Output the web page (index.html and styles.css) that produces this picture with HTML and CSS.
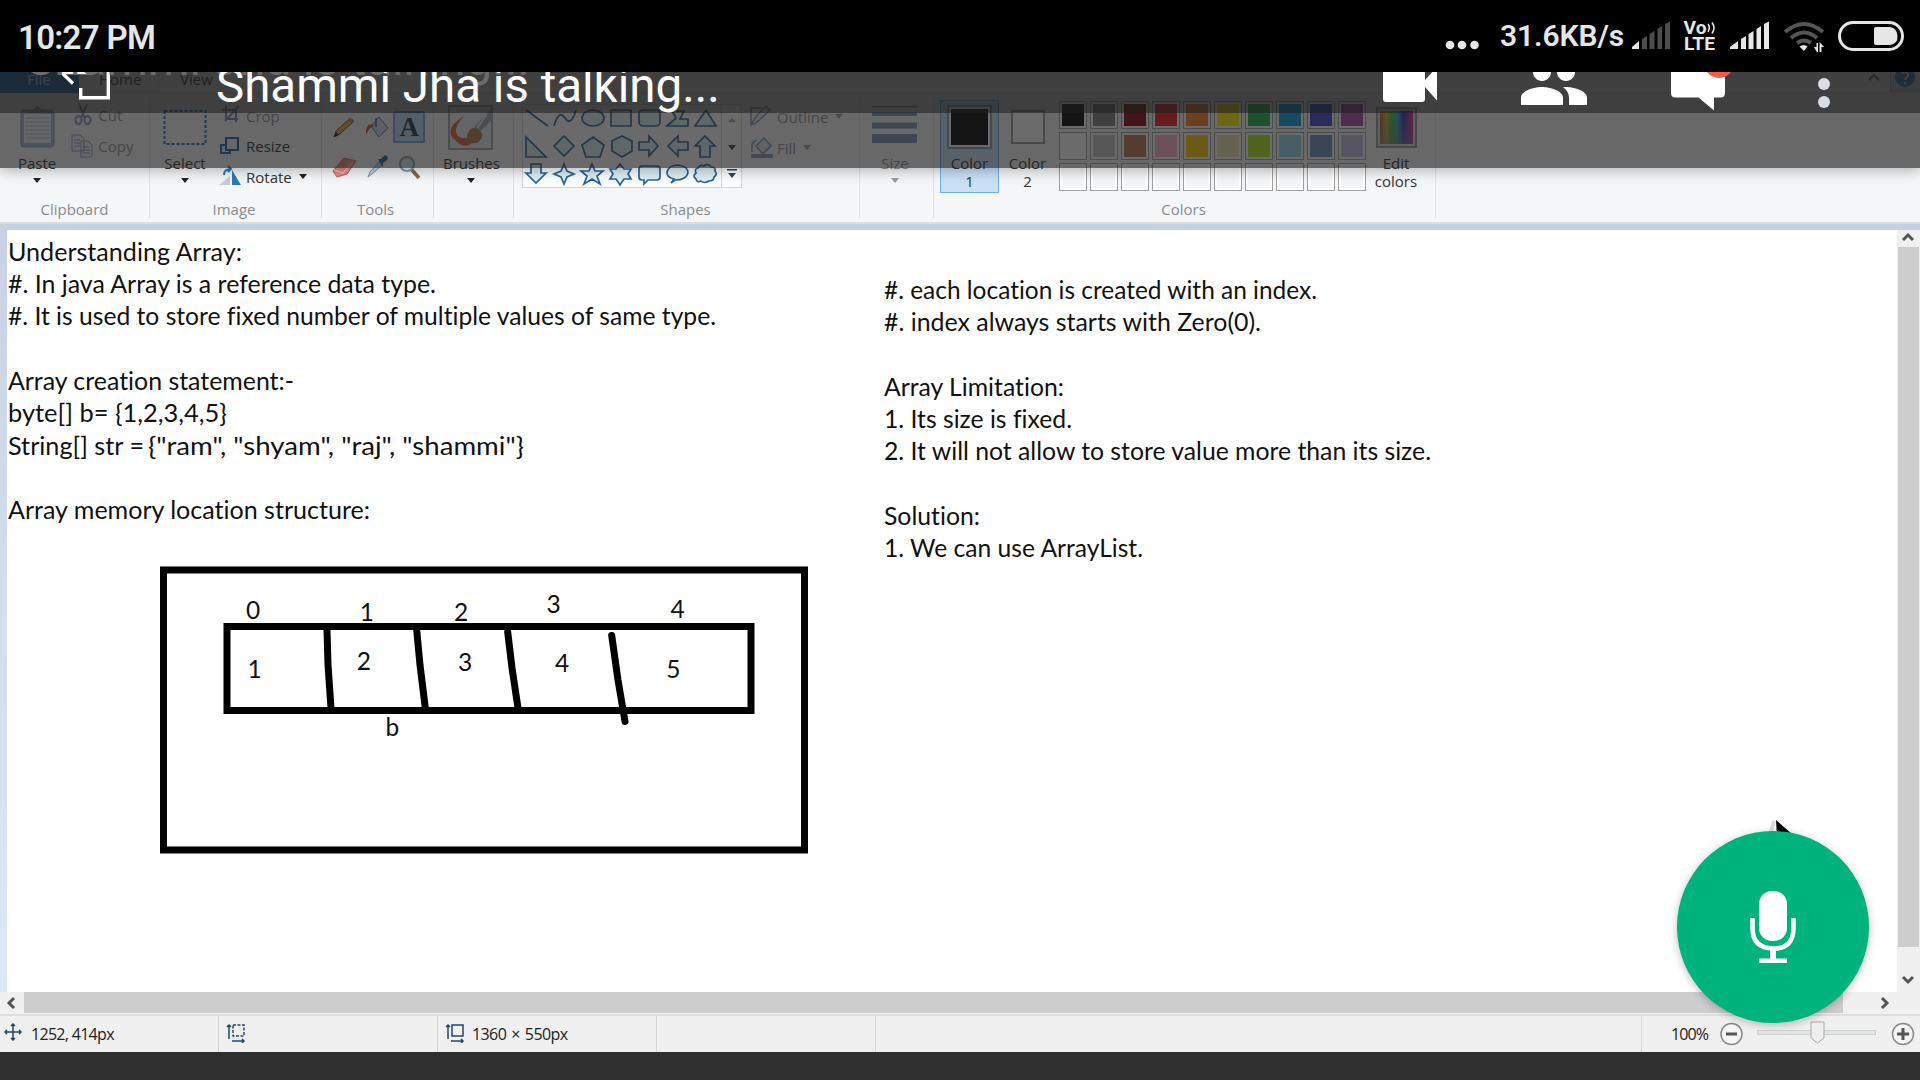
FILE: index.html
```html
<!DOCTYPE html>
<html lang="en">
<head>
<meta charset="utf-8">
<title>Shammi Jha is talking…</title>
<link rel="stylesheet" href="styles.css">
</head>
<body>
<div class="screen">
  <div class="statusbar">
    <span class="clock">10:27 PM</span>
    <svg class="more-dots" width="36" height="12"><circle cx="6" cy="6" r="4.3"/><circle cx="18" cy="6" r="4.3"/><circle cx="30.500" cy="6" r="4.3"/></svg>
    <span class="speed">31.6KB/s</span>
    <svg class="sys-icons" width="280" height="36" viewBox="1628 18 280 36">
      <path d="M1632 49V47L1639 41V49Z"/>
      <g class="faint"><path d="M1642 49V39L1647 36V49ZM1649.500 49V34L1654.500 31V49ZM1657.500 49V29L1662 26V49ZM1665 49V24L1670 21.500V49Z"/></g>
      <g class="volte"><text x="1683.500" y="34" textLength="23" lengthAdjust="spacingAndGlyphs">Vo</text><text x="1684" y="50" textLength="31" lengthAdjust="spacingAndGlyphs">LTE</text><path d="M1708 24q2.500 3.500 0 8M1712 22.500q4 5 0 11"/></g>
      <path d="M1730 49V47L1738 41V49ZM1741 49V39L1746 36V49ZM1748.500 49V34L1753.500 31V49ZM1756.500 49V29L1761 26V49ZM1764 49V24L1769 21.500V49Z"/>
      <g class="wifi"><path d="M1785 32Q1804 16 1823 32M1791 38Q1804 27 1817 38M1797 43Q1804 38 1811 43"/></g>
      <path d="M1799.500 46.500q4.500-3 8 0l-3.500 4.500ZM1814 47h2.500V43h1.500v9h-1.200ZM1819.500 42l4.500 5h-2.500v5h-2Z"/>
      <rect class="batt-line" x="1839.500" y="22.500" width="63" height="27" rx="13.500"/>
      <path d="M1876 27h14q7 1 7.500 9t-7.500 9h-14q-2 0-2-2V29q0-2 2-2Z"/>
    </svg>
  </div>

  <div class="callbar">
    <svg class="leave" width="40" height="50" viewBox="75 60 40 50" ><path d="M59 72.500H93M60 71L73 83.500M80.700 88V97.700H108.300V62"/></svg>
    <span class="ghost">Shammi Jha is talking...</span>
    <span class="talker">Shammi Jha is talking...</span>
    <svg class="call-icons" width="470" height="66" viewBox="1376 50 470 66">
      <path d="M1383 55h42v25L1437 67v33.500L1425 87v12q0 3-3 3h-36q-3 0-3-3Z"/>
      <g transform="translate(1518 48) scale(3)"><path d="M16 11c1.660 0 2.990-1.340 2.990-3S17.660 5 16 5c-1.660 0-3 1.340-3 3s1.340 3 3 3zm-8 0c1.660 0 2.990-1.340 2.990-3S9.660 5 8 5C6.340 5 5 6.340 5 8s1.340 3 3 3zm0 2c-2.330 0-7 1.170-7 3.500V19h14v-2.500c0-2.330-4.670-3.500-7-3.500zm8 0c-.29 0-.62.020-.97.050 1.160.840 1.970 1.970 1.970 3.450V19h6v-2.500c0-2.330-4.670-3.500-7-3.500z"/></g>
      <path d="M1671 55h54v38q0 4.500-4.500 4.500H1714V110.500L1698.500 97.500H1675.500q-4.500 0-4.500-4.500Z"/>
      <circle class="unread" cx="1719" cy="63" r="15"/>
      <g class="menu"><circle cx="1824" cy="84" r="6"/><circle cx="1824" cy="102" r="6"/></g>
    </svg>
  </div>
  <div class="veil"></div>

  <div class="tabs">
    <span class="tab file">File</span><span class="tab home">Home</span><span class="tab">View</span>
    <svg class="tab-tools" width="56" height="21"><path d="M5 8l5-5 5 5" fill="none" stroke="#777" stroke-width="2.500"/><rect x="26.500" y="-4" width="34" height="23" fill="#dcebf8" stroke="#99c6ec"/><circle cx="41" cy="5" r="10" fill="#1c80d2"/><path d="M38 2q3-4 6 0q1 2-3 5v1M41 10v2" stroke="#fff" stroke-width="2" fill="none"/></svg>
  </div>

  <div class="ribbon">
    <section class="group clipboard">
      <div class="tools">
        <div class="big paste">
          <svg width="35" height="43"><rect x="1" y="5" width="33" height="37" rx="3" fill="#a8b4ce" stroke="#8795b3"/><rect x="4" y="9" width="27" height="29" fill="#eef1f6"/><path d="M5 13h25M5 17h25M5 21h25M5 25h25M5 29h25M5 33h25" stroke="#b3bdcf"/><path d="M9 8V5h5q3-8 7 0h5v3Z" fill="#929db5"/></svg>
          <span>Paste</span><i class="caret"></i>
        </div>
        <div class="list">
          <div class="row dim"><svg width="24" height="24"><path d="M8 1l6 14M16 1l-6 14" stroke="#8490ab" stroke-width="2"/><g fill="none" stroke="#8490ab" stroke-width="2"><ellipse cx="7.500" cy="17" rx="3" ry="4"/><ellipse cx="16.500" cy="17" rx="3" ry="4"/></g></svg><span>Cut</span></div>
          <div class="row dim"><svg width="24" height="24"><g fill="#eef1f7" stroke="#8f9bb9"><path d="M1 1h8l4 4v12H1ZM10 7h7l4 4v12H10Z"/><path d="M3 6h6M3 9h6M3 12h6M12 13h6M12 16h7M12 19h7"/></g></svg><span>Copy</span></div>
        </div>
      </div>
      <div class="caption">Clipboard</div>
    </section>

    <section class="group image">
      <div class="tools">
        <div class="big select"><svg width="44" height="43"><rect x="1.500" y="6" width="41" height="33" fill="none" stroke="#2b6cb0" stroke-width="2" stroke-dasharray="3 2"/></svg><span>Select</span><i class="caret"></i></div>
        <div class="list">
          <div class="row dim"><svg width="24" height="24"><path d="M4 6h13v12M7 2v13h12M6 17L20 2" fill="none" stroke="#7785a5" stroke-width="2"/></svg><span>Crop</span></div>
          <div class="row"><svg width="24" height="24"><g fill="#eaf4fb" stroke="#1f66a7" stroke-width="2"><rect x="2" y="11" width="9" height="8"/><rect x="7" y="4" width="12" height="12"/></g></svg><span>Resize</span></div>
          <div class="row"><svg width="24" height="24"><path d="M0 20L11 11V20Z" fill="#c5ccd3"/><path d="M13 20V5l9 15Z" fill="#267bba"/><path d="M5 10q0-6 7-6M9 1l3 3-3 3" fill="none" stroke="#267bba" stroke-width="2"/></svg><span>Rotate</span><i class="caret"></i></div>
        </div>
      </div>
      <div class="caption">Image</div>
    </section>

    <section class="group paint">
      <svg class="art" width="112" height="92" viewBox="322 98 112 92">
        <path d="M334 137l2-6 14-13 4 3-14 13Z" fill="#dca94b" stroke="#6b5430"/><path d="M334 137l2-5 3 3Z" fill="#222"/><path d="M349 119l4 3" stroke="#d77" stroke-width="3"/>
        <path d="M371 126l8-9 9 11-9 9Z" fill="#cbdce8" stroke="#58758e"/><path d="M376 118v9" stroke="#476178" stroke-width="1.500"/><path d="M366 134q-1-12 9-9l-5 3Z" fill="#cf4934"/>
        <rect x="394" y="112" width="30" height="30" fill="#b8d9f7" stroke="#4790d7" stroke-width="1.500"/><text class="letter" x="399.500" y="136">A</text>
        <path d="M333 171l11-13 12 3-9 13-10 3Z" fill="#e68a84" stroke="#bd615d"/><path d="M334 170l9 3 11-12" fill="none" stroke="#f3bab5" stroke-width="1.500"/>
        <path d="M368 177l2-5 10-11 3 3-11 10Z" fill="#c1d8e8" stroke="#7290a8"/><path d="M378 159l3 0 4-4q4 1 2 5l-4 3 0 4Z" fill="#245d91"/>
        <circle cx="407" cy="164" r="7" fill="#d6e9f5" stroke="#8c98a4" stroke-width="2"/><path d="M412 170l7 8" stroke="#86654c" stroke-width="3.500"/>
      </svg>
      <div class="caption">Tools</div>
    </section>

    <section class="group brushes">
      <div class="tools"><div class="big">
        <svg width="46" height="45"><rect x="1" y="1" width="43" height="43" fill="#e9edf2" stroke="#8a8a8a" stroke-width="1.500"/><path d="M16 11Q-7 25 9 37q11 10 20-6Q10 37 8 27q-1-6 8-16Z" fill="#e15e3c"/><path d="M26 22L43 4V16L32 27Z" fill="#a0a9b4"/><path d="M39 9L29 23" stroke="#e7eff6" stroke-width="2"/><path d="M18 39q1-20 12-15 9 7-1 14Z" fill="#b27b42"/></svg>
        <span>Brushes</span><i class="caret"></i></div></div>
    </section>

    <section class="group shapes">
      <div class="tools">
        <svg width="222" height="92" viewBox="521 98 222 92">
          <rect x="522.500" y="104.500" width="219" height="83" fill="#fcfdfe" stroke="#d2d6dc"/><path d="M721.500 104V187" stroke="#d2d6dc"/>
          <g fill="#dceff6" stroke="#2c6495" stroke-width="1.700">
            <path d="M526 110l22 16M554 126q5-17 11-8t11-8" fill="none"/><ellipse cx="593" cy="118" rx="11" ry="8"/><path d="M611 110h20v16h-20Z"/><rect x="639" y="110" width="21" height="16" rx="4"/><path d="M667 126l9-8-4-7h12l-4 8h8v7ZM695 126l11-16 10 16Z"/>
            <path d="M526 137v20h20ZM564 136l10 10-10 10-10-10ZM593 137l11 8-4 12h-14l-4-12ZM622 136l10 5v10l-10 6-10-6v-10ZM639 142h10v-6l9 10-9 10v-6h-10ZM688 142h-10v-6l-10 10 10 10v-6h10ZM705 136l10 10h-5v11h-10v-11h-5Z"/>
            <path d="M531 164h10v9h5l-10 10-10-10h5ZM564 164l3 7 7 3-7 3-3 7-3-7-7-3 7-3ZM592 164l3 7h8l-6 5 3 8-8-5-8 5 3-8-6-5h8ZM620 164l4 5h7l-3 5 3 5h-7l-4 6-4-6h-6l3-5-3-5h6Z"/>
            <path d="M642 166h15q3 0 3 3v8q0 3-3 3h-9l-4 4v-4h-2q-3 0-3-3v-8q0-3 3-3ZM671 183l3-4q-8-2-7-7 2-7 11-7 10 1 10 8-2 7-13 7ZM698 168q2-4 6-2 4-3 7 1 5 0 4 4 3 3-1 6 0 4-5 4-5 3-8 0-4 2-5-2-4-3 0-6-2-4 2-5Z"/>
          </g>
          <path d="M728 122l4-4 4 4Z" fill="#9da4ad"/><path d="M728 145h8l-4 5ZM727 169h10v1.500h-10ZM728 173h8l-4 5Z" fill="#35455e"/>
        </svg>
        <div class="list">
          <div class="row dim"><svg width="24" height="24"><path d="M1 3h11M1 3v17l5-2L20 5l-4-4L5 13 1 20" fill="#eef1f6" stroke="#8794af" stroke-width="1.500"/></svg><span>Outline</span><i class="caret"></i></div>
          <div class="row dim"><svg width="24" height="24"><path d="M2 16V8l4-4M6 10l8-8 7 8-8 8Z" fill="#dfe5ee" stroke="#8190ae" stroke-width="1.500"/><path d="M1 18h22v4H1Z" fill="#8c9abd"/></svg><span>Fill</span><i class="caret"></i></div>
        </div>
      </div>
      <div class="caption">Shapes</div>
    </section>

    <section class="group size"><div class="tools"><div class="big dim">
      <svg width="46" height="43"><path d="M0 1h45v1.500H0ZM0 7h45v4H0ZM0 17.500h45v6H0ZM0 29h45v9H0Z" fill="#8391b5"/></svg>
      <span>Size</span><i class="caret"></i></div></div></section>

    <section class="group colors">
      <div class="tools">
        <div class="big current"><b class="swatch black"></b><span>Color<br>1</span></div>
        <div class="big second"><b class="swatch"></b><span>Color<br>2</span></div>
        <div class="palette">
          <i style="background:#000"></i><i style="background:#7f7f7f"></i><i style="background:#880015"></i><i style="background:#ed1c24"></i><i style="background:#ff7f27"></i><i style="background:#fff200"></i><i style="background:#22b14c"></i><i style="background:#00a2e8"></i><i style="background:#3f48cc"></i><i style="background:#a349a4"></i>
          <i style="background:#fff"></i><i style="background:#c3c3c3"></i><i style="background:#b97a57"></i><i style="background:#ffaec9"></i><i style="background:#ffc90e"></i><i style="background:#efe4b0"></i><i style="background:#b5e61d"></i><i style="background:#99d9ea"></i><i style="background:#7092be"></i><i style="background:#c8bfe7"></i>
          <i></i><i></i><i></i><i></i><i></i><i></i><i></i><i></i><i></i><i></i>
        </div>
        <div class="big edit"><b class="spectrum"></b><span>Edit<br>colors</span></div>
      </div>
      <div class="caption">Colors</div>
    </section>
  </div>

  <div class="workspace">
    <svg class="canvas" viewBox="7 230 1890 762" width="1890" height="762">
      <g class="notes">
        <text x="8" y="260.700" textLength="234" lengthAdjust="spacingAndGlyphs">Understanding Array:</text>
        <text x="8" y="293" textLength="428" lengthAdjust="spacingAndGlyphs">#. In java Array is a reference data type.</text>
        <text x="8" y="325.300" textLength="708" lengthAdjust="spacingAndGlyphs">#. It is used to store fixed number of multiple values of same type.</text>
        <text x="8" y="389.900" textLength="286" lengthAdjust="spacingAndGlyphs">Array creation statement:-</text>
        <text x="8" y="422.200" textLength="219" lengthAdjust="spacingAndGlyphs">byte[] b= {1,2,3,4,5}</text>
        <text x="8" y="454.500" textLength="136" lengthAdjust="spacingAndGlyphs">String[] str =</text>
        <text x="148" y="454.500" textLength="376" lengthAdjust="spacingAndGlyphs">{"ram", "shyam", "raj", "shammi"}</text>
        <text x="8" y="519.100" textLength="362" lengthAdjust="spacingAndGlyphs">Array memory location structure:</text>
        <text x="884" y="298.800" textLength="433" lengthAdjust="spacingAndGlyphs">#. each location is created with an index.</text>
        <text x="884" y="331.100" textLength="377" lengthAdjust="spacingAndGlyphs">#. index always starts with Zero(0).</text>
        <text x="884" y="395.700" textLength="180" lengthAdjust="spacingAndGlyphs">Array Limitation:</text>
        <text x="884" y="428" textLength="188" lengthAdjust="spacingAndGlyphs">1. Its size is fixed.</text>
        <text x="884" y="460.300" textLength="547" lengthAdjust="spacingAndGlyphs">2. It will not allow to store value more than its size.</text>
        <text x="884" y="524.900" textLength="96" lengthAdjust="spacingAndGlyphs">Solution:</text>
        <text x="884" y="557.200" textLength="259" lengthAdjust="spacingAndGlyphs">1. We can use ArrayList.</text>
      </g>
      <g class="boxes"><rect x="163.500" y="570" width="641" height="280"/><rect x="227" y="626.500" width="524" height="84"/></g>
      <path class="dividers" d="M327 630L328 665L331 708M416.700 630L420 665L425.300 708M507.700 632L512 668L518 708M611.700 635.500L618 680L625 721.500"/>
      <g class="digits">
        <text x="253.200" y="618.500">0</text><text x="366.800" y="620.500">1</text><text x="461" y="620.500">2</text><text x="553.700" y="612.700">3</text><text x="677.500" y="617.500">4</text>
        <text x="254.500" y="677.700">1</text><text x="363.800" y="669.500">2</text><text x="465" y="671">3</text><text x="562" y="672">4</text><text x="673.400" y="677.700">5</text><text x="392.400" y="735.500">b</text>
      </g>
      <path class="pointer-shade" d="M1774 821l-4 14"/>
      <path class="pointer" d="M1776 820L1793 835L1777 837Z"/>
    </svg>
    <div class="vscroll"><svg width="22" height="17"><path d="M6 10l5-5 5 5"/></svg><div class="vthumb"></div><svg width="22" height="45"><path d="M6 30l5 5 5-5"/></svg></div>
  </div>

  <div class="hscroll"><svg width="24" height="22"><path d="M14 6l-5 5 5 5"/></svg><div class="hthumb"></div><svg class="right" width="77" height="22"><path d="M39 6l5 5-5 5"/></svg></div>

  <div class="infobar">
    <div class="cell"><svg width="18" height="18"><path d="M9 1v16M1 9h16M7 3l2-2 2 2M7 15l2 2 2-2M3 7L1 9l2 2M15 7l2 2-2 2"/></svg><span class="pos">1252, 414px</span></div>
    <div class="cell"><svg width="20" height="20"><path d="M3 16V2M1 4l2-2 2 2M6 18h12M16 16l2 2-2 2"/><rect x="7" y="2" width="11" height="11" stroke-dasharray="3 1.500"/></svg></div>
    <div class="cell"><svg width="20" height="20"><path d="M3 16V2M1 4l2-2 2 2M6 18h12M16 16l2 2-2 2"/><rect x="7" y="2" width="11" height="11"/></svg><span class="dims">1360 × 550px</span></div>
    <div class="cell"></div><div class="cell wide"></div>
    <div class="zoom"><span>100%</span>
      <svg width="198" height="30" viewBox="1718 1020 198 30"><g fill="#f5f5f5" stroke="#888" stroke-width="1.500"><circle cx="1731.500" cy="1035" r="10.500"/><circle cx="1903" cy="1035" r="10.500"/></g><path d="M1726 1035h11M1897 1035h12M1903 1029v12" stroke="#555" stroke-width="3"/><rect x="1757.500" y="1031.500" width="118" height="4" fill="#e4e6e6" stroke="#ccd0d0"/><path d="M1811 1023h13v16l-6.500 5-6.500-5Z" fill="#eee" stroke="#aaa"/></svg>
    </div>
  </div>
  <div class="navbar"></div>

  <div class="mic"><svg width="50" height="76" viewBox="1748 889 50 76"><rect x="1759" y="891" width="28" height="50" rx="13"/><path class="cradle" d="M1752.500 918v10q0 20 20.500 20.500t20.500-20.500v-10"/><path d="M1770 948h6v10.500h11v4.500h-28v-4.500h11Z"/></svg></div>
</div>
</body>
</html>
```
FILE: styles.css
```css
* { box-sizing: border-box; }
body { margin: 0; background: #303030; font-family: "Open Sans", sans-serif; }
svg { display: block; flex: none; }
.screen { position: relative; width: 1920px; height: 1080px; overflow: hidden; display: flex; flex-direction: column; }

/* phone status bar */
.statusbar { position: relative; z-index: 5; flex: none; height: 72px; background: #000; color: #e6e6e6; fill: #e6e6e6; font-family: Roboto, sans-serif; font-weight: 600; display: flex; padding-left: 18px; white-space: nowrap; }
.clock { font-size: 33px; line-height: 39px; margin-top: 18px; width: 1426px; letter-spacing: -.7px; }
.more-dots { margin-top: 39px; }
.speed { font-size: 30px; line-height: 36px; margin: 18px 0 0 20px; width: 128px; letter-spacing: -.1px; }
.sys-icons { margin-top: 18px; }
.faint { fill: #4c4c4c; }
.volte text { font-size: 18px; font-weight: 700; }
.volte path { fill: none; stroke: #e6e6e6; stroke-width: 1.500px; }
.wifi path { fill: none; stroke: #555; stroke-width: 4px; }
.batt-line { fill: none; stroke: #e6e6e6; stroke-width: 3px; }

/* call controls lie over the shared desktop */
.callbar { position: absolute; z-index: 3; top: 0; left: 0; width: 1920px; height: 113px; background: rgba(30, 30, 30, .55); display: flex; align-items: flex-start; font-family: Roboto, sans-serif; font-size: 47.500px; line-height: 56px; white-space: nowrap; }
.leave { margin: 60px 0 0 75px; overflow: visible; }
.leave path { fill: none; stroke: #fff; stroke-width: 3.400px; }
.talker { position: relative; color: #fff; margin: 58px 0 0 100px; padding-left: 1px; width: 1161px; }
.ghost { position: absolute; left: 26px; top: 31px; color: #6c6c6c; }
.call-icons { margin-top: 50px; fill: #fff; }
.unread { fill: #fa5b48; }
.menu { fill: #dadde2; }
.veil { position: absolute; z-index: 2; top: 0; left: 0; width: 1920px; height: 168px; background: rgba(30, 30, 30, .66); box-shadow: 0 3px 12px rgba(0, 0, 0, .28); }

/* paint window */
.tabs { flex: none; height: 21px; background: #fff; border-bottom: 1px solid #ddd; display: flex; font-size: 15px; line-height: 14px; color: #333; }
.tab { padding-left: 21px; width: 81px; }
.file { width: 79px; padding-left: 27px; background: #1979ca; color: #fff; height: 21px; }
.home { width: 80px; padding-left: 20px; border-right: 1px solid #ddd; background: #f5f6f7; }
.tab-tools { margin-left: auto; }
.ribbon { flex: none; height: 131px; background: #f5f6f7; border-bottom: 2px solid #dcdddf; display: flex; padding-top: 5px; font-size: 15px; line-height: 18px; color: #333; }
.group { height: 120px; border-right: 1px solid #dfe0e2; display: flex; flex-direction: column; justify-content: space-between; }
.tools { display: flex; height: 96px; }
.caption { text-align: center; color: #888b90; line-height: 18px; padding-right: 2px; }
.big { display: flex; flex-direction: column; align-items: center; padding-top: 7px; text-align: center; }
.big span { margin-top: 4px; }
.big .caret { margin-top: 6px; }
.big svg { height: 45px; }
.caret { width: 0; height: 0; border: 4px solid transparent; border-top: 5px solid #222; border-bottom: 0; }
.list { display: flex; flex-direction: column; padding-top: 5px; }
.row { height: 31px; display: flex; align-items: center; gap: 3px; padding-bottom: 4px; }
.row .caret { margin: 0 0 0 4px; }
.dim { color: #8e9095; }
.dim .caret { border-top-color: #999; }
.clipboard { width: 150px; padding-right: 28px; }
.clipboard .caption { margin-right: -28px; padding-right: 0; }
.clipboard .tools { padding-left: 18px; gap: 15px; }
.clipboard .list { padding-top: 3px; }
.image { width: 172px; }
.image .tools { padding-left: 13px; gap: 12px; }
.image .caption { padding-right: 3px; }
.paint { width: 112px; }
.paint .caption { padding-right: 4px; }
.letter { font: bold 27px "Liberation Serif", serif; fill: #26354e; }
.brushes { width: 80px; }
.brushes .tools { padding-left: 9px; }
.shapes { width: 346px; }
.shapes .tools { padding-left: 7px; gap: 7px; }
.size { width: 74px; }
.size .tools { padding-left: 12px; }
.colors { width: 502px; }
.colors .tools { padding-left: 6px; }
.current { width: 59px; height: 93px; margin-top: 2px; padding-top: 4px; background: #c9e0f7; border: 1.500px solid #6eb1ee; }
.second { width: 55px; margin-left: 1px; padding: 12px 0 0; }
.swatch { flex: none; width: 34px; height: 34px; border: 2px solid #999; background: #fff; }
.current .swatch { width: 45px; height: 44px; border: 2px solid #8a9bad; background: #000; box-shadow: inset 0 0 0 2px #fff; }
.current span { margin-top: 5px; }
.second span { margin-top: 10px; }
.palette { display: grid; grid-template-columns: repeat(10, 28px); grid-auto-rows: 28px; gap: 3px; margin: 3px 0 0 4px; }
.palette i { border: 1.500px solid #a0a0a0; box-shadow: inset 0 0 0 2px #fff; }
.edit { width: 60px; margin-left: 0; padding-top: 9px; }
.spectrum { flex: none; width: 41px; height: 41px; border: 2px solid #999; background: linear-gradient(transparent, rgba(128, 128, 128, .6)), linear-gradient(90deg, #c22, #db2 22%, #2c2 38%, #2bc 52%, #22c 68%, #c2a 88%, #d33); box-shadow: inset 0 0 0 2px #ddd; }
.edit span { margin-top: 6px; }

.workspace { flex: none; height: 768px; padding-left: 7px; border-top: 6px solid #c5d0e1; background: linear-gradient(#c8d2e4, #dce8f6); display: flex; }
.canvas { background: #fff; }
.notes, .digits { font-family: Lato, sans-serif; font-size: 24.500px; fill: #111; font-variant-ligatures: none; }
.digits { text-anchor: middle; }
.boxes { fill: none; stroke: #000; stroke-width: 7px; }
.dividers { fill: none; stroke: #000; stroke-width: 7px; stroke-linecap: round; stroke-linejoin: round; }
.pointer-shade { stroke: #ddd; stroke-width: 4px; }
.vscroll, .hscroll { background: #f0f0f0; display: flex; }
.vscroll { width: 23px; flex-direction: column; }
.vscroll path, .hscroll path { fill: none; stroke: #555; stroke-width: 3px; }
.vthumb { flex: 1; width: 21px; margin-left: 1px; background: #cdcdcd; }
.hscroll { flex: none; height: 24px; border-bottom: 2px solid #dedede; }
.hthumb { flex: 1; height: 21px; background: #cdcdcd; }
.infobar { flex: none; height: 36px; background: #f0f0f0; display: flex; font-size: 16px; line-height: 22px; color: #222; white-space: nowrap; }
.cell { width: 219px; border-right: 1.500px solid #d6d6d6; display: flex; align-items: flex-start; padding: 7px 0 0 7px; }
.cell:first-child { padding-left: 4px; }
.cell svg { fill: none; stroke: #23456f; stroke-width: 1.500px; }
.pos { margin: 0 0 0 9px; letter-spacing: -.7px; }
.dims { margin-left: 7px; letter-spacing: -.6px; word-spacing: 1.500px; }
.wide { width: 766px; }
.zoom { display: flex; padding: 3px 0 0 29px; }
.zoom span { width: 47px; margin-top: 4px; letter-spacing: -.9px; }
.navbar { flex: none; height: 28px; background: #303030; }

.mic { position: absolute; z-index: 4; left: 1677px; top: 831px; width: 192px; height: 192px; border-radius: 50%; background: #00b27b; box-shadow: 0 2px 8px rgba(0, 0, 0, .25); display: flex; align-items: center; justify-content: center; fill: #fff; }
.cradle { fill: none; stroke: #fff; stroke-width: 4.600px; }
```
